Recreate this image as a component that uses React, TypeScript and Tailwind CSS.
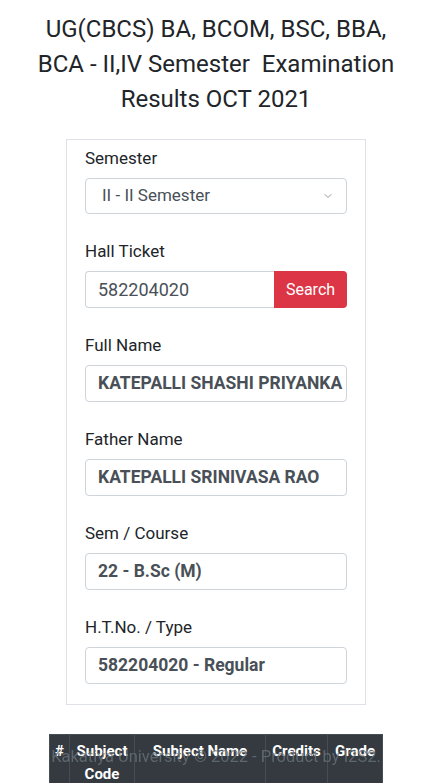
import { ChevronDown } from "lucide-react";

const fields = [
	{ label: "Full Name", value: "KATEPALLI SHASHI PRIYANKA" },
	{ label: "Father Name", value: "KATEPALLI SRINIVASA RAO" },
	{ label: "Sem / Course", value: "22 - B.Sc (M)" },
	{ label: "H.T.No. / Type", value: "582204020 - Regular" },
];

const rows = [
	{ code: "BS201", name: "English", credits: "4", grade: "B" },
	{ code: "BS202", name: "Telugu", credits: "4", grade: "A" },
	{ code: "BS203", name: "Mathematics", credits: "5", grade: "B+" },
];

const App = () => {
	return (
		<div className="min-h-screen bg-white text-[#212529] pb-16" style={{ fontFamily: "Roboto, 'Noto Sans', sans-serif" }}>
			<h1 className="pt-3 px-4 text-center text-[24px] leading-[35px] font-normal">
				UG(CBCS) BA, BCOM, BSC, BBA,
				<br />
				BCA - II,IV Semester&nbsp; Examination
				<br />
				Results OCT 2021
			</h1>

			<div className="mt-[22px] mx-auto w-[300px] border border-[#dee2e6] px-[18px] pt-[6px] pb-[20px]">
				<div>
					<label className="block text-[17px] leading-6 mb-2">Semester</label>
					<div className="relative h-[36px] border border-[#ced4da] rounded-[4px] flex items-center pl-4 pr-3 text-[17px] text-[#495057]">
						<span className="flex-1">II - II Semester</span>
						<ChevronDown className="w-3 h-3 text-[#6c757d]" strokeWidth={1.5} />
					</div>
				</div>

				<div className="mt-[25px]">
					<label className="block text-[17px] leading-6 mb-2">Hall Ticket</label>
					<div className="flex h-[37px]">
						<div className="flex-1 border border-[#ced4da] border-r-0 rounded-l-[4px] flex items-center px-3 text-[18px] text-[#495057]">
							582204020
						</div>
						<button className="w-[73px] bg-[#dc3545] text-white text-[16px] rounded-r-[4px]">Search</button>
					</div>
				</div>

				{fields.map((f) => (
					<div key={f.label} className="mt-[25px]">
						<label className="block text-[17px] leading-6 mb-2">{f.label}</label>
						<div className="h-[37px] border border-[#ced4da] rounded-[4px] flex items-center px-3 text-[17.5px] font-bold text-[#495057] whitespace-nowrap overflow-hidden">
							{f.value}
						</div>
					</div>
				))}
			</div>

			<table className="mt-[29px] mx-auto w-[333px] border-collapse text-[15px] table-fixed">
				<thead>
					<tr className="bg-[#343a40] text-white font-bold">
						<th className="w-[20px] border border-[#454d55] align-top pt-[5px] leading-[23px]">#</th>
						<th className="w-[65px] border border-[#454d55] align-top pt-[5px] leading-[23px]">Subject Code</th>
						<th className="w-[131px] border border-[#454d55] align-top pt-[5px] leading-[23px]">Subject Name</th>
						<th className="w-[62px] border border-[#454d55] align-top pt-[5px] leading-[23px]">Credits</th>
						<th className="w-[55px] border border-[#454d55] align-top pt-[5px] leading-[23px]">Grade</th>
					</tr>
				</thead>
				<tbody>
					{rows.map((r, i) => (
						<tr key={r.code}>
							<td className="border border-[#dee2e6] p-2 text-center">{i + 1}</td>
							<td className="border border-[#dee2e6] p-2 text-center">{r.code}</td>
							<td className="border border-[#dee2e6] p-2">{r.name}</td>
							<td className="border border-[#dee2e6] p-2 text-center">{r.credits}</td>
							<td className="border border-[#dee2e6] p-2 text-center">{r.grade}</td>
						</tr>
					))}
				</tbody>
			</table>

			<footer className="fixed bottom-0 left-0 right-0 h-[52px] flex items-center justify-center text-[16.5px] text-[#6c757d]/75">
				Kakatiya University © 2022 - Product by I2S2.
			</footer>
		</div>
	);
};

export default App;
